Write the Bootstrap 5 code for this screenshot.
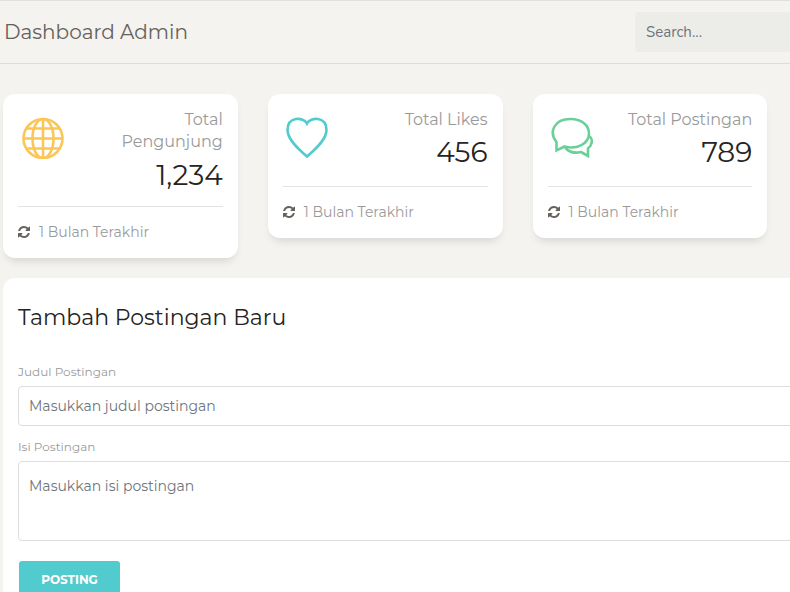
<!DOCTYPE html>
<html lang="id">
<head>
<meta charset="utf-8">
<meta name="viewport" content="width=device-width, initial-scale=1">
<title>Dashboard Admin</title>
<link href="https://cdn.jsdelivr.net/npm/bootstrap@5.3.0/dist/css/bootstrap.min.css" rel="stylesheet">
<style>
body{background:#f4f3ef;font-family:Montserrat,Inter,"Open Sans",sans-serif;font-size:14px;font-weight:400;color:#252422;overflow:hidden;height:592px}
.shell{width:1029.1px;margin-left:3px}
.topbar{height:64px;border-top:1px solid #dfe2dc;border-bottom:1px solid #dddcd8;width:1059px;padding:0 0 0 4px}
.brand{font-size:20px;color:#66615b;line-height:30px}
.search{width:220px;height:40px;background:#ecede8;border:0;border-radius:4px;padding:0 11px;font-family:Nunito,Muli,"Open Sans",sans-serif;font-size:15px;margin-right:204px}
.stats{--bs-gutter-x:30px;padding-top:30px}
.tile{background:#fff;border:0;border-radius:12px;box-shadow:0 6px 10px -4px rgba(0,0,0,.15);padding:15px 15px 16px}
.glyph{width:42px;height:42px;margin:8px 0 0 3.500px;fill:none;stroke-width:2.600}
.cap{font-size:16px;line-height:22px;color:#9a9a9a}
.num{font-size:28px;line-height:40px;margin-top:1px}
.rule{height:1px;background:#e3e3e3;margin-top:14px}
.tall .num{margin-top:2px}
.tall .rule{margin-top:11px}
.foot{color:#9a9a9a;font-size:14px;line-height:20px;margin-top:15px}
.foot svg{width:12px;height:12px;fill:#66615b;margin-right:9px}
.formcard{background:#fff;border:0;border-radius:12px;height:400px;padding:25px 15px;margin-top:20px}
.formcard h4{font-size:22px;font-weight:400;line-height:30px;margin:0 0 29px}
.lab{font-size:12px;color:#9a9a9a;line-height:20px;display:block;margin-bottom:4px}
.field{border:1px solid #ddd;border-radius:4px;padding:0 10px;height:40px;font:400 14px Montserrat,Inter,sans-serif;resize:none;margin-bottom:11px}
textarea.field{height:80px;padding-top:15px;margin-bottom:20px}
.field::placeholder,.search::placeholder{color:#6c757d;opacity:1}
.post{background:#51cbce;color:#fff;border:0;border-radius:3px;width:101px;height:38px;font-size:12px;font-weight:700;line-height:38px;padding:0;margin-left:1px}
</style>
</head>
<body>
<header class="topbar d-flex align-items-center justify-content-between">
  <span class="brand">Dashboard Admin</span>
  <input class="form-control search" placeholder="Search...">
</header>
<main class="shell">
  <div class="row stats align-items-start">
    <div class="col-3"><div class="card tile tall">
      <div class="d-flex justify-content-between">
        <svg class="glyph flex-shrink-0" viewBox="0 0 42 42" stroke="#fbc658"><circle cx="21" cy="21.500" r="19.500"/><ellipse cx="21" cy="21.500" rx="10.500" ry="19.500"/><path d="M21 2V41M1.500 21.500H40.500M4.500 11.500H37.500M4.500 31.500H37.500"/></svg>
        <div class="text-end"><div class="cap">Total<br>Pengunjung</div><div class="num">1,234</div></div>
      </div>
      <div class="rule"></div>
      <div class="foot d-flex align-items-center"><svg viewBox="0 0 1536 1536"><use href="#sync"/></svg>1 Bulan Terakhir</div>
    </div></div>
    <div class="col-3"><div class="card tile">
      <div class="d-flex justify-content-between">
        <svg class="glyph flex-shrink-0" viewBox="0 0 42 42" stroke="#51cbce"><path d="M21 6.500C17.500-.5 1.500-.5 1.500 13C1.500 22 11 31 21 39.500C31 31 40.500 22 40.500 13C40.500-.5 24.500-.5 21 6.500Z"/></svg>
        <div class="text-end"><div class="cap">Total Likes</div><div class="num">456</div></div>
      </div>
      <div class="rule"></div>
      <div class="foot d-flex align-items-center"><svg viewBox="0 0 1536 1536"><use href="#sync"/></svg>1 Bulan Terakhir</div>
    </div></div>
    <div class="col-3"><div class="card tile">
      <div class="d-flex justify-content-between">
        <svg class="glyph flex-shrink-0" viewBox="0 0 42 42" stroke="#6bd098"><path d="M5.500 25C-2.500 15 3 2 19.500 2C31 2 38 8.500 38 16.500C38 26.500 26 33 13.500 29.500L5.500 33.500ZM14 30C17 35.500 24 36.500 30 35L37 39V31.500C42 27 42 21.500 37.500 18.500"/></svg>
        <div class="text-end"><div class="cap">Total Postingan</div><div class="num">789</div></div>
      </div>
      <div class="rule"></div>
      <div class="foot d-flex align-items-center"><svg viewBox="0 0 1536 1536"><path id="sync" d="M1511 928q0 5-1 7-64 268-268 434.500T764 1536q-146 0-282.500-55T238 1324l-129 129q-19 19-45 19t-45-19-19-45V960q0-26 19-45t45-19h448q26 0 45 19t19 45-19 45l-137 137q71 66 161 102t187 36q134 0 250-65t186-179q11-17 53-117 8-23 30-23h192q13 0 22.500 9.500t9.500 22.500zm25-800v448q0 26-19 45t-45 19h-448q-26 0-45-19t-19-45 19-45l138-138Q969 256 768 256q-134 0-250 65T332 500q-11 17-53 117-8 23-30 23H50q-13 0-22.500-9.500T18 608v-7q65-268 270-434.500T768 0q146 0 284 55.500T1297 212l130-129q19-19 45-19t45 19 19 45z"/></svg>1 Bulan Terakhir</div>
    </div></div>
  </div>
  <section class="card formcard">
    <h4>Tambah Postingan Baru</h4>
    <label class="lab" for="judul">Judul Postingan</label>
    <input id="judul" class="form-control field" placeholder="Masukkan judul postingan">
    <label class="lab" for="isi">Isi Postingan</label>
    <textarea id="isi" class="form-control field" placeholder="Masukkan isi postingan"></textarea>
    <button class="btn post" type="button">POSTING</button>
  </section>
</main>
<script src="https://cdn.jsdelivr.net/npm/bootstrap@5.3.0/dist/js/bootstrap.bundle.min.js"></script>
</body>
</html>
